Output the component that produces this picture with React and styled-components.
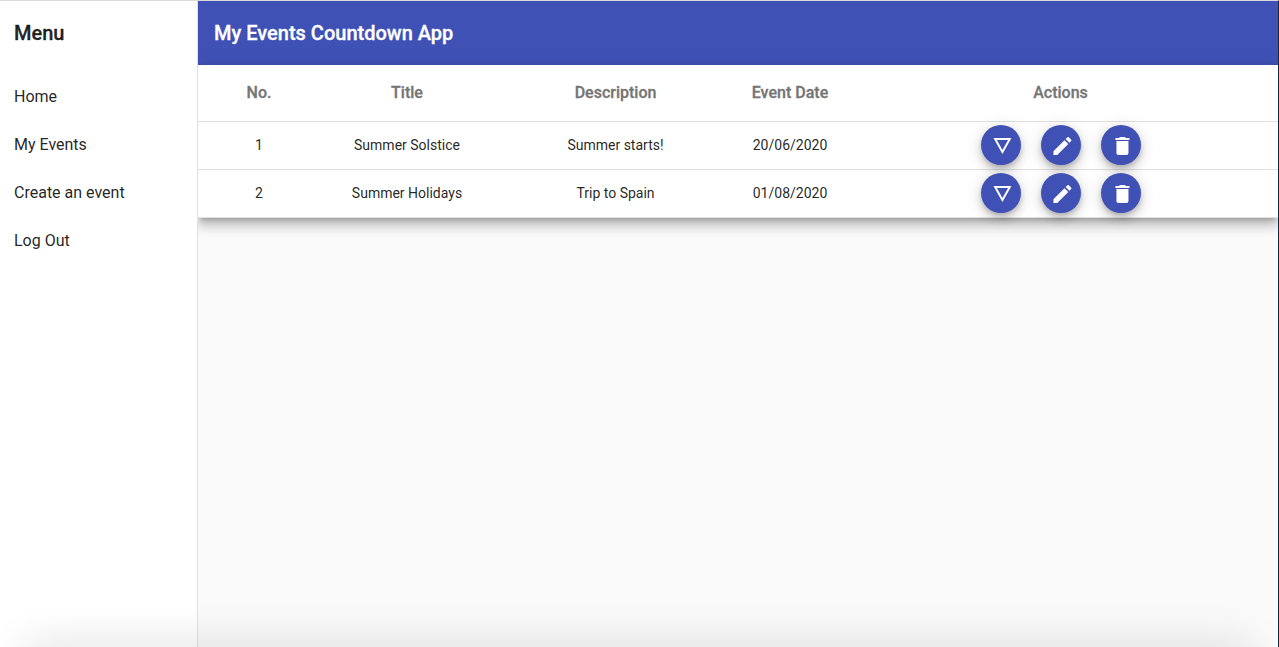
import React from "react";
import styled, { createGlobalStyle } from "styled-components";

const GlobalStyle = createGlobalStyle`
  *, *::before, *::after { box-sizing: border-box; }
  body { margin: 0; background: #fafafa; }
  body, button { font-family: Roboto, "Liberation Sans", sans-serif; }
`;

const Shell = styled.div`
  position: relative;
  display: flex;
  height: 100vh;
  overflow: hidden;
  border-top: 1px solid #d9dadc;
  border-right: 1px solid #13293f;
  color: rgba(0, 0, 0, 0.87);
`;

const Sidebar = styled.aside`
  position: relative;
  z-index: 1;
  flex: 0 0 198px;
  background: #fff;
  border-right: 1px solid #e0e0e0;
`;

const MenuHeading = styled.h2`
  margin: 0;
  height: 64px;
  padding-left: 14px;
  font-size: 20px;
  font-weight: 500;
  line-height: 64px;
  -webkit-text-stroke: 0.3px currentColor;
`;

const MenuLink = styled.a`
  display: block;
  height: 48px;
  padding-left: 14px;
  font-size: 16px;
  line-height: 48px;
  cursor: pointer;
`;

const Nav = styled.nav`
  padding-top: 8px;
`;

const Content = styled.main`
  flex: 1;
  min-width: 0;
  background: #fafafa;
`;

const Toolbar = styled.header`
  height: 64px;
  padding: 0 16px;
  background: #3f51b5;
  color: #fff;
  font-size: 20px;
  font-weight: 500;
  line-height: 64px;
  -webkit-text-stroke: 0.3px currentColor;
`;

const Table = styled.div`
  background: #fff;
  box-shadow: 0 5px 5px -3px rgba(0, 0, 0, 0.2),
    0 8px 10px 1px rgba(0, 0, 0, 0.14), 0 3px 14px 2px rgba(0, 0, 0, 0.12);
`;

const Row = styled.div`
  display: grid;
  grid-template-columns: 122px 174px 243px 106px 1fr;
  align-items: center;
  height: ${(p) => (p.$head ? 57 : 48)}px;
  padding-bottom: ${(p) => (p.$head ? 2 : 1)}px;
  border-bottom: 1px solid #e0e0e0;
  text-align: center;
  font-size: ${(p) => (p.$head ? 16 : 14)}px;
  font-weight: ${(p) => (p.$head ? 500 : 400)};
  color: ${(p) => (p.$head ? "#757575" : "rgba(0, 0, 0, 0.87)")};
  -webkit-text-stroke: ${(p) => (p.$head ? "0.3px currentColor" : "0")};
`;

const Actions = styled.div`
  display: flex;
  justify-content: center;
  gap: 20px;
`;

const Fab = styled.button`
  display: flex;
  align-items: flex-start;
  justify-content: flex-start;
  width: 40px;
  height: 40px;
  border: 0;
  border-radius: 50%;
  padding: 9px 0 0 9.5px;
  background: #3f51b5;
  color: #fff;
  box-shadow: 0 3px 5px -1px rgba(0, 0, 0, 0.2),
    0 6px 10px 0 rgba(0, 0, 0, 0.14), 0 1px 18px 0 rgba(0, 0, 0, 0.12);
  cursor: pointer;
`;

const Glyph = styled.svg`
  flex: none;
  width: 24px;
  height: 24px;
  fill: currentColor;
`;

const BottomShade = styled.div`
  position: absolute;
  z-index: 2;
  left: 30px;
  right: 30px;
  bottom: -20px;
  height: 20px;
  box-shadow: 0 0 40px 4px rgba(0, 0, 0, 0.13);
  pointer-events: none;
`;

const icons = [
  { name: "Details", d: "M3 4l9 16 9-16H3zm3.38 2h11.25L12 16 6.38 6z" },
  {
    name: "Edit",
    d: "M3 17.25V21h3.75L17.81 9.94l-3.75-3.75L3 17.25zM20.71 7.04a.996.996 0 0 0 0-1.41l-2.34-2.34a.996.996 0 0 0-1.41 0l-1.83 1.83 3.75 3.75 1.83-1.83z",
  },
  {
    name: "Delete",
    d: "M6 19c0 1.1.9 2 2 2h8c1.1 0 2-.9 2-2V7H6v12zM19 4h-3.5l-1-1h-5l-1 1H5v2h14V4z",
  },
];

const events = [
  ["1", "Summer Solstice", "Summer starts!", "20/06/2020"],
  ["2", "Summer Holidays", "Trip to Spain", "01/08/2020"],
];

export default function App() {
  return (
    <>
      <GlobalStyle />
      <Shell>
        <Sidebar>
          <MenuHeading>Menu</MenuHeading>
          <Nav>
            {["Home", "My Events", "Create an event", "Log Out"].map((label) => (
              <MenuLink key={label}>{label}</MenuLink>
            ))}
          </Nav>
        </Sidebar>
        <Content>
          <Toolbar>My Events Countdown App</Toolbar>
          <Table>
            <Row $head>
              {["No.", "Title", "Description", "Event Date", "Actions"].map((h) => (
                <span key={h}>{h}</span>
              ))}
            </Row>
            {events.map((event) => (
              <Row key={event[0]}>
                {event.map((value) => (
                  <span key={value}>{value}</span>
                ))}
                <Actions>
                  {icons.map((icon) => (
                    <Fab key={icon.name} aria-label={icon.name}>
                      <Glyph viewBox="-0.45 0 24 24">
                        <path d={icon.d} />
                      </Glyph>
                    </Fab>
                  ))}
                </Actions>
              </Row>
            ))}
          </Table>
        </Content>
        <BottomShade />
      </Shell>
    </>
  );
}
